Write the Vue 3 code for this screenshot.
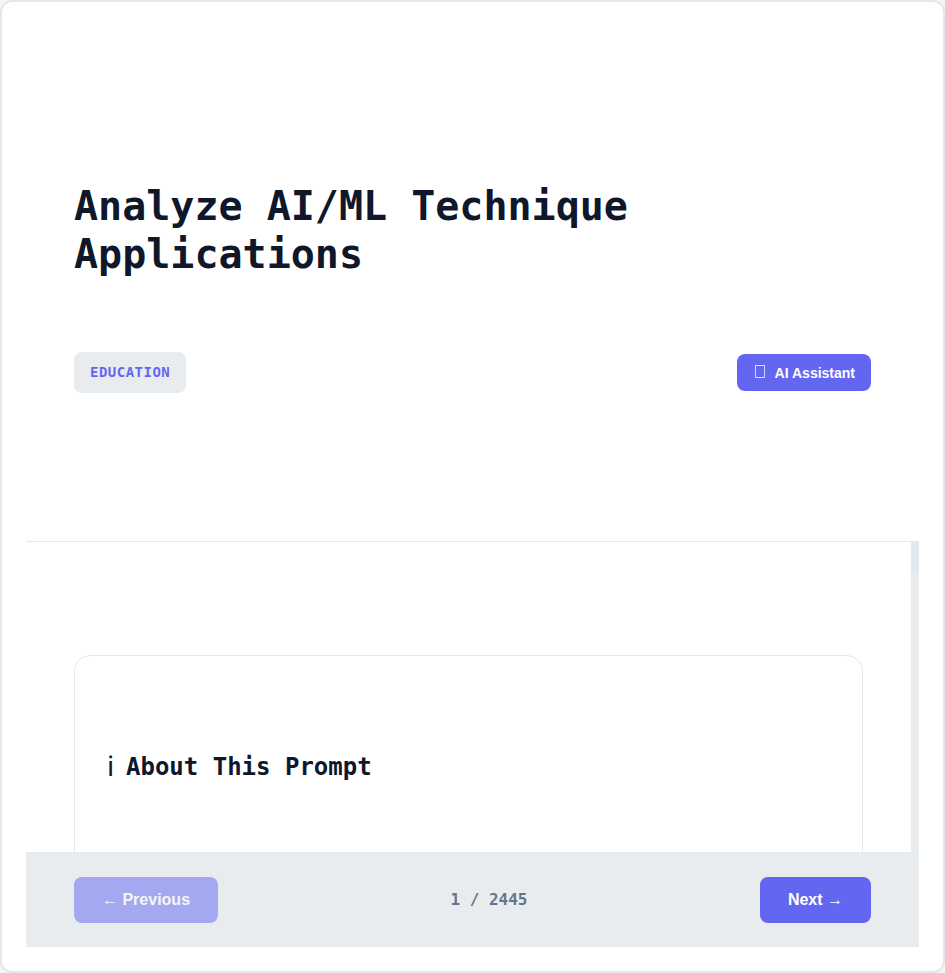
<script setup>
import { ref, computed } from 'vue'

const total = 2445
const index = ref(1)
const isFirst = computed(() => index.value === 1)
const isLast = computed(() => index.value === total)
</script>

<template>
  <main class="frame">
    <header class="head">
      <h1 class="title">Analyze AI/ML Technique Applications</h1>
      <div class="meta">
        <span class="badge">EDUCATION</span>
        <button class="btn assistant" type="button">
          <svg class="assistant-icon" width="14" height="20" viewBox="0 0 14 20" aria-hidden="true">
            <rect x="2.5" y="2.5" width="9" height="12" fill="none" stroke="#fff" stroke-opacity="0.75" />
          </svg>
          <span>AI Assistant</span>
        </button>
      </div>
    </header>

    <div class="viewport">
      <div class="content">
        <section class="card">
          <h2 class="section-title"><span class="info">ℹ</span>About This Prompt</h2>
        </section>
      </div>
      <div class="rail"><div class="thumb"></div></div>
    </div>

    <footer class="foot">
      <button class="btn nav" type="button" :disabled="isFirst" @click="index--">← Previous</button>
      <span class="counter">{{ index }} / {{ total }}</span>
      <button class="btn nav" type="button" :disabled="isLast" @click="index++">Next →</button>
    </footer>
  </main>
</template>

<style>
body {
  margin: 0;
  background: #f5f5f5;
}
</style>

<style scoped>
.frame {
  box-sizing: border-box;
  height: 100vh;
  padding: 24px;
  display: flex;
  flex-direction: column;
  background: #fff;
  border: 2px solid #e2e8f0;
  border-radius: 12px;
  color: #0f172a;
  font-family: "Liberation Sans", sans-serif;
}

.head {
  display: flex;
  flex-direction: column;
  gap: 74px;
  padding: 156px 48px 148px;
  border-bottom: 1px solid #e2e8f0;
}

.title {
  margin: 0;
  font: bold 40px/48px "DejaVu Sans Mono", monospace;
}

.meta {
  display: flex;
  align-items: center;
  justify-content: space-between;
}

.badge {
  padding: 8px 16px;
  border-radius: 8px;
  background: #e8ecef;
  color: #6366f1;
  font: bold 14px/25px "DejaVu Sans Mono", monospace;
  letter-spacing: 0.035em;
}

.btn {
  border: 0;
  border-radius: 8px;
  background: #6366f1;
  color: #fff;
  font-family: "Liberation Sans", sans-serif;
  font-weight: 600;
  cursor: pointer;
}

.btn:disabled {
  opacity: 0.5;
  cursor: not-allowed;
}

.assistant {
  display: flex;
  align-items: center;
  gap: 8px;
  padding: 9px 16px 8px;
  font-size: 14px;
  line-height: 20px;
}

.viewport {
  flex: 1;
  min-height: 0;
  display: flex;
}

.content {
  flex: 1;
  padding: 113px 48px;
  overflow-y: auto;
  scrollbar-width: none;
}

.rail {
  width: 8px;
  background: #e8ecef;
}

.thumb {
  height: 31px;
  border-radius: 4px;
  background: #e2e8f0;
}

.card {
  box-sizing: border-box;
  min-height: 2880px;
  padding: 92px 32px;
  border: 1px solid #e2e8f0;
  border-radius: 16px;
}

.section-title {
  display: flex;
  align-items: center;
  gap: 12px;
  margin: 0;
  font: bold 24px/38px "DejaVu Sans Mono", monospace;
}

.info {
  font-size: 28px;
  font-weight: 400;
}

.foot {
  display: flex;
  align-items: center;
  justify-content: space-between;
  padding: 24px 48px;
  background: #e8ecef;
  border-top: 1px solid #e2e8f0;
}

.nav {
  padding: 14px 28px;
  font-size: 16px;
  line-height: 18px;
}

.counter {
  color: #64748b;
  font: bold 16px/24px "DejaVu Sans Mono", monospace;
}
</style>
